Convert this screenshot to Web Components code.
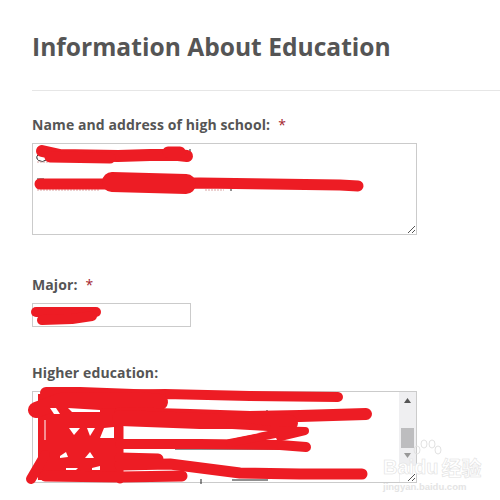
<!DOCTYPE html>
<html>
<head>
<meta charset="utf-8">
<style>
  html, body { margin: 0; background: #fff; }
  body { width: 500px; height: 500px; overflow: hidden; position: relative; font-family: "Open Sans", sans-serif; }
</style>
</head>
<body>
<edu-form>
  <form-title>Information About Education</form-title>
  <form-field label="Name and address of high school:" required gap="40">
    <text-box height="92" width="385"></text-box>
  </form-field>
  <form-field label="Major:" required gap="36">
    <text-box height="24" width="159"></text-box>
  </form-field>
  <form-field label="Higher education:">
    <text-box height="92" width="385" scroll></text-box>
  </form-field>
</edu-form>
<red-scribble></red-scribble>
<baidu-mark></baidu-mark>
<script>
class EduForm extends HTMLElement {
  constructor() {
    super();
    this.attachShadow({ mode: "open" });
    this.shadowRoot.innerHTML = `
      <style>
        :host { display: block; padding: 29px 0 0 32px; color: #555; font-family: "Open Sans", sans-serif; }
      </style>
      <slot></slot>`;
  }
}

class FormTitle extends HTMLElement {
  constructor() {
    super();
    this.attachShadow({ mode: "open" });
    this.shadowRoot.innerHTML = `
      <style>
        :host { display: block; height: 61px; margin-bottom: 24px; border-bottom: 1px solid #e6e6e6; }
        h2 { margin: 0; font-size: 24.6px; line-height: 36px; font-weight: 700; color: #555; white-space: nowrap; }
      </style>
      <h2><slot></slot></h2>`;
  }
}

class FormField extends HTMLElement {
  constructor() {
    super();
    this.attachShadow({ mode: "open" });
  }

  connectedCallback() {
    const star = this.hasAttribute("required") ? `<span class="star">*</span>` : "";
    this.shadowRoot.innerHTML = `
      <style>
        :host { display: block; margin-bottom: ${this.getAttribute("gap") || 0}px; }
        label { display: block; height: 20px; margin-bottom: 8px; font-size: 14px; line-height: 20px; font-weight: 700; letter-spacing: .1px; color: #555; white-space: nowrap; }
        .star { margin-left: 8px; color: #a3242c; font-weight: 400; }
      </style>
      <label>${this.getAttribute("label")}${star}</label>
      <slot></slot>`;
  }
}

class TextBox extends HTMLElement {
  constructor() {
    super();
    this.attachShadow({ mode: "open" });
  }

  connectedCallback() {
    const scroll = this.hasAttribute("scroll");
    const bar = scroll ? `
      <div class="bar">
        <svg width="13" height="90" viewBox="0 0 13 90">
          <path d="M3 11 L10 11 L6.5 6 Z" fill="#555"/>
          <rect x="0" y="36" width="13" height="20" fill="#bdbdbf"/>
          <path d="M3 61 L10 61 L6.5 66 Z" fill="#999"/>
        </svg>
      </div>` : "";
    const grip = `
      <svg class="grip" width="${scroll ? 16 : 9}" height="${scroll ? 16 : 9}" viewBox="0 0 ${scroll ? 16 : 9} ${scroll ? 16 : 9}">
        <path d="${scroll ? "M8 15 L15 8 M12 15 L15 12" : "M1 8 L8 1 M5 8 L8 5"}" stroke="#555" stroke-width="1" fill="none"/>
      </svg>`;
    this.shadowRoot.innerHTML = `
      <style>
        :host { display: block; box-sizing: border-box; width: ${this.getAttribute("width")}px; height: ${this.getAttribute("height")}px; border: 1px solid #cbcbcb; background: #fff; }
        .inner { display: flex; justify-content: flex-end; height: 100%; position: relative; }
        .bar { width: 17px; background: #efeff1; display: flex; justify-content: center; overflow: hidden; }
        .grip { position: absolute; right: 0; bottom: 0; background: #fff; }
      </style>
      <div class="inner">${bar}${this.getAttribute("height") > 50 ? grip : ""}</div>`;
  }
}

// red marker strokes lie over the form, so this one is a free canvas
class RedScribble extends HTMLElement {
  constructor() {
    super();
    this.attachShadow({ mode: "open" });
    this.shadowRoot.innerHTML = `
      <style>
        :host { display: block; position: absolute; left: 0; top: 0; width: 500px; height: 500px; }
        svg { display: block; }
        .m { fill: none; stroke: #ed1c24; stroke-linecap: round; stroke-linejoin: round; }
      </style>
      <svg width="500" height="500" viewBox="0 0 500 500">
        <!-- bits of the text under the marker -->
        <g stroke="#222" stroke-width="1" fill="none">
          <path d="M38 155 a4 3 0 0 0 8 5 M190 149 V153 M37 179 H44 M231 187 V191 M231 187 H240 M289 187 V189"/>
          <path d="M175 449 H285 M268 480 H232 M201 479 V484 M267 410 V412 M303 410 V412"/>
        </g>
        <path d="M37 162 H48 M37 190 H100 M205 190 H224" stroke="#d9a3a3" stroke-width="1" stroke-dasharray="2 1"/>

        <path class="m" stroke-width="12" d="M42 151 L60 155 L118 156 L150 155 L178 155 L187 156"/>
        <path class="m" stroke-width="11" d="M50 157 L110 158 M168 152 L180 152"/>
        <path class="m" stroke-width="11" d="M40 184 L105 184 L200 183 L270 184 L340 185 L358 186"/>
        <path class="m" stroke-width="20" d="M112 182 L186 184"/>
        <path class="m" stroke-width="10" d="M36 312 L96 312"/>
        <path class="m" stroke-width="10" d="M42 320 L72 319 L92 316"/>

        <path class="m" stroke-width="10" d="M50 396 L165 394 L250 396 L338 397"/>
        <path class="m" stroke-width="12" d="M46 393 L80 393 L160 396"/>
        <rect x="38" y="394" width="84" height="86" fill="#ed1c24"/>
        <path class="m" stroke-width="16" d="M36 410 L60 401 L140 400 L160 402"/>
        <path class="m" stroke-width="12" d="M120 413 L190 415 L250 417 L300 416 L366 414"/>
        <path class="m" stroke-width="16" d="M120 418 L200 421 L290 423"/>
        <path class="m" stroke-width="8" d="M230 425 L270 430 L305 431 L280 437"/>
        <path class="m" stroke-width="10" d="M120 444 L200 444 L280 445 L306 447"/>
        <path class="m" stroke-width="8" d="M230 443 L275 434"/>
        <path class="m" stroke-width="11" d="M120 458 L158 459"/>
        <path class="m" stroke-width="11" d="M120 465 L170 464 L240 473 L300 474 L362 474"/>
        <path class="m" stroke-width="11" d="M45 476 L120 477 L182 476"/>
        <path class="m" stroke-width="10" d="M45 455 L31 479"/>
        <path class="m" stroke-width="7" d="M120 427 V480"/>

        <!-- gaps the marker missed -->
        <g fill="#fff">
          <path d="M50 408 L56 408 L60 414 L54 414 Z"/>
          <path d="M68 408 L100 410 L100 412 L72 412 Z"/>
          <path d="M69 428 L80 428 L74 435 Z"/>
          <path d="M87 428 L95 428 L90 436 Z"/>
          <path d="M104 428 L114 427 L114 438 L100 438 Z"/>
          <path d="M60 456 L66 452 L68 457 L60 458 Z"/>
          <path d="M85 458 L90 452 L94 458 Z"/>
          <path d="M66 468 L78 468 L76 470 L66 470 Z"/>
          <path d="M92 468 L100 466 L100 470 L92 470 Z"/>
          <path d="M44.5 420 H45.5 V440 H44.5 Z"/>
          <path d="M124 429 H232 L268 431 L232 438 H124 Z"/>
          <path d="M168 402 L210 403 L240 408 L200 408 L172 407 Z"/>
        </g>
      </svg>`;
  }
}

// site watermark in the bottom corner
class BaiduMark extends HTMLElement {
  constructor() {
    super();
    this.attachShadow({ mode: "open" });
    this.shadowRoot.innerHTML = `
      <style>
        :host { display: block; position: absolute; left: 383px; top: 447px; width: 92px; height: 46px; font-family: "Liberation Sans", "Noto Sans CJK SC", sans-serif; }
        .row { display: flex; align-items: center; gap: 3px; height: 27px; margin-top: 7px; font-size: 20px; font-weight: 700; -webkit-text-stroke: .6px #e2e2e2; color: #fff; white-space: nowrap; }
        .url { font-size: 9.5px; line-height: 12px; color: #e4e4e4; font-weight: 700; white-space: nowrap; }
        svg { position: absolute; left: 28px; top: -9px; }
      </style>
      <svg width="32" height="24" viewBox="0 0 32 24" fill="none" stroke="#e2e2e2">
        <ellipse cx="6" cy="12" rx="3" ry="4"/>
        <ellipse cx="13" cy="6" rx="3" ry="4"/>
        <ellipse cx="21" cy="6" rx="3" ry="4"/>
        <ellipse cx="27" cy="12" rx="3" ry="4"/>
      </svg>
      <div class="row"><span>Baidu</span><span>经验</span></div>
      <div class="url">jingyan.baidu.com</div>`;
  }
}

customElements.define("edu-form", EduForm);
customElements.define("form-title", FormTitle);
customElements.define("form-field", FormField);
customElements.define("text-box", TextBox);
customElements.define("red-scribble", RedScribble);
customElements.define("baidu-mark", BaiduMark);
</script>
</body>
</html>
